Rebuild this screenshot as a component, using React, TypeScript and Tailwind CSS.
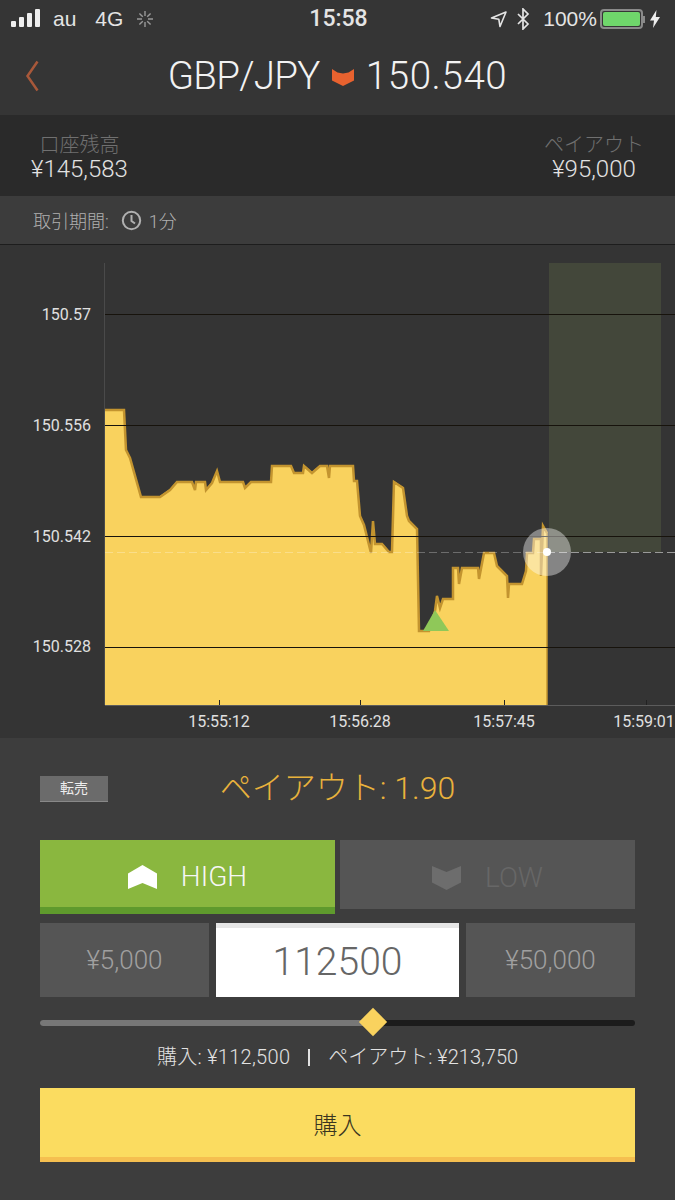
import React from "react";

const latin = "font-['Roboto','Noto_Sans_CJK_JP',sans-serif]";

// price line, in page coordinates (the chart svg uses the same numbers in its viewBox)
const PRICE_LINE =
  "105,409 124,409 126,449 130,457 141,496 160,496 170,489 177,481 192,481 195,489 196,481 205,481 206,489 212,482 217,470 220,481 243,481 245,487 251,481 271,481 272,465 291,465 294,472 303,472 304,465 312,472 320,465 327,465 329,477 330,465 353,465 354,480 357,480 360,515 364,524 371,552 373,520 375,543 382,543 389,551 392,551 394,481 403,487 407,515 409,520 417,528 419,630 429,630 435,610 437,595 440,607 443,598 453,598 453,567 458,567 459,583 462,567 478,567 479,578 484,552 494,552 497,565 507,575 508,597 509,583 522,583 526,570 527,552 533,552 534,538 541,538 541,575 543,525 547,532";

function StatusBar() {
  return (
    <div className="h-[38px] flex items-center justify-between pl-[11px] pr-[15px] text-[#e4e4e4] font-['Liberation_Sans',sans-serif] text-[21px]">
      <div className="flex items-center w-[200px]">
        <svg width="30" height="20" viewBox="0 0 30 20" fill="#eee">
          <rect x="0" y="12" width="5" height="6" rx="1" />
          <rect x="8" y="8" width="5" height="10" rx="1" />
          <rect x="16" y="4" width="5" height="14" rx="1" />
          <rect x="24" y="0" width="5" height="18" rx="1" />
        </svg>
        <span className="ml-[12px]">au</span>
        <span className="ml-[19px]">4G</span>
        <svg className="ml-[12px]" width="20" height="20" viewBox="0 0 20 20" stroke="#999" strokeWidth="1.4">
          <path d="M10 2v5M10 13v5M2 10h5M13 10h5M4.400 4.400l3.400 3.400M12.200 12.200l3.400 3.400M4.400 15.600l3.400-3.400M12.200 7.800l3.400-3.400" />
        </svg>
      </div>
      <span className={`${latin} font-medium text-[23px] ml-[6px]`}>15:58</span>
      <div className="flex items-center justify-end w-[200px]">
        <svg width="18" height="18" viewBox="0 0 18 18" fill="none" stroke="#e4e4e4" strokeWidth="1.6">
          <path d="M1.500 8L16 2l-6 14.500-1.200-7.300z" strokeLinejoin="round" />
        </svg>
        <svg className="ml-[8px]" width="15" height="22" viewBox="0 0 15 22" fill="none" stroke="#e4e4e4" strokeWidth="1.7">
          <path d="M2 6l10 10-5 5V1l5 5L2 16" />
        </svg>
        <span className="ml-[12px]">100%</span>
        <div className="ml-[3px] w-[43px] h-[20px] rounded-[4px] border-2 border-[#8a8a8a] p-[1px]">
          <div className="w-full h-full bg-[#6fd66b] rounded-[2px]" />
        </div>
        <div className="w-[2px] h-[7px] bg-[#8a8a8a] mr-[5px]" />
        <svg width="10" height="18" viewBox="0 0 10 18" fill="#eee">
          <path d="M6.500 0L0 10.500h4L3 18l7-11H5.800z" />
        </svg>
      </div>
    </div>
  );
}

function Header() {
  return (
    <div className="relative h-[77px] flex items-center justify-center pb-[2px]">
      <svg className="absolute left-[25px] top-[22px]" width="15" height="32" viewBox="0 0 15 32" fill="none" stroke="#a8583a" strokeWidth="2.500">
        <path d="M12.500 1.500L2.500 16l10 14.500" />
      </svg>
      <div className={`${latin} font-light text-[38.500px] text-[#f2f2f2] flex items-center`}>
        <span className="tracking-[-0.7px]">GBP/JPY</span>
        <svg className="mx-[12px] mt-[2px]" width="22" height="19" viewBox="0 0 22 19" fill="#e8622f">
          <path d="M0 2l5.500 3.500L11 6.500l5.500-1L22 2v11.500L11 19 0 13.500z" />
        </svg>
        <span className="tracking-[0.6px]">150.540</span>
      </div>
    </div>
  );
}

function BalancePanel() {
  return (
    <div className={`${latin} h-[81px] bg-[#2a2a2a] flex justify-between pl-[31px] pr-[31px] pt-[20px] leading-none`}>
      <div className="flex flex-col items-center">
        <span className="text-[20px] font-light text-[#707070]">口座残高</span>
        <span className="text-[24px] font-light text-[#e2e2e2] mt-[2px]">¥145,583</span>
      </div>
      <div className="flex flex-col items-center">
        <span className="text-[20px] font-light text-[#707070]">ペイアウト</span>
        <span className="text-[24px] font-light text-[#e2e2e2] mt-[2px]">¥95,000</span>
      </div>
    </div>
  );
}

function PeriodRow() {
  return (
    <div className={`${latin} h-[49px] bg-[#3c3c3c] border-b border-[#1d1d1d] flex items-center pl-[33px] pt-[2px] text-[18px] text-[#b0b0b0]`}>
      <span className="font-light">取引期間:</span>
      <svg className="ml-[12px] mb-[2px]" width="21" height="21" viewBox="0 0 21 21" fill="none" stroke="#b0b0b0" strokeWidth="2">
        <circle cx="10.500" cy="10.500" r="8.700" />
        <path d="M10.500 5v6l3.500 2.500" />
      </svg>
      <span className="ml-[7px] font-light">1分</span>
    </div>
  );
}

function Chart() {
  const grid = [314, 425, 536, 647];
  const priceLabels = [
    { y: 314, text: "150.57" },
    { y: 425, text: "150.556" },
    { y: 536, text: "150.542" },
    { y: 646, text: "150.528" },
  ];
  const ticks = [
    { x: 219, labelX: 219, text: "15:55:12" },
    { x: 360, labelX: 360, text: "15:56:28" },
    { x: 504, labelX: 504, text: "15:57:45" },
    { x: 646, labelX: 644, text: "15:59:01" },
  ];

  return (
    <div className="h-[493px] bg-[#343434]">
      <svg className="block w-full h-full" viewBox="0 245 675 493" fontFamily="Roboto, sans-serif">
        <rect x="549" y="263" width="112" height="289" fill="#43473a" />
        <line x1="104.500" y1="263" x2="104.500" y2="705" stroke="#4a4a4a" />
        <line x1="105" y1="705.500" x2="675" y2="705.500" stroke="#5c5c5c" />
        <polygon points={`${PRICE_LINE} 547,705 105,705`} fill="#f9d25e" />
        <polyline points={PRICE_LINE} fill="none" stroke="#c3942f" strokeWidth="2.500" transform="translate(0 1)" />
        <line x1="547" y1="532" x2="547" y2="705" stroke="#c3942f" strokeWidth="1.500" />
        {grid.map((y) => (
          <line key={y} x1="105" y1={y + 0.5} x2="675" y2={y + 0.5} stroke="#17130c" />
        ))}
        <line x1="105" y1="552.500" x2="547" y2="552.500" stroke="#fff" strokeOpacity="0.28" strokeDasharray="8 4" />
        <line x1="547" y1="552.500" x2="675" y2="552.500" stroke="#fff" strokeOpacity="0.5" strokeDasharray="8 4" />
        <polygon points="423,631 435,610 449,631" fill="#8fc859" />
        <circle cx="547" cy="552" r="24" fill="#fff" fillOpacity="0.4" />
        <circle cx="547" cy="552" r="4" fill="#fff" />
        {priceLabels.map((p) => (
          <text key={p.text} x="91" y={p.y + 6} textAnchor="end" fontSize="16" fill="#e0e0e0">
            {p.text}
          </text>
        ))}
        {ticks.map((t) => (
          <g key={t.text}>
            <line x1={t.x + 0.5} y1="700" x2={t.x + 0.5} y2="705" stroke="#222" />
            <text x={t.labelX} y="727" textAnchor="middle" fontSize="16" fill="#e0e0e0">
              {t.text}
            </text>
          </g>
        ))}
      </svg>
    </div>
  );
}

function HighLow() {
  return (
    <div className="flex gap-[5px] mt-[38px] items-start">
      <button className="w-[295px] h-[74px] bg-[#8ab73f] border-b-[7px] border-[#5f9a2d] pt-[7px] flex items-center justify-center text-[#f6f6f6] text-[28px] font-light">
        <svg className="mb-[1px]" width="29" height="24" viewBox="0 0 29 24" fill="#fff">
          <path d="M14.500 0L29 8.500V24l-14.500-6L0 24V8.500z" />
        </svg>
        <span className="ml-[24px]">HIGH</span>
      </button>
      <button className="w-[295px] h-[69px] bg-[#555] pt-[7px] flex items-center justify-center text-[#676767] text-[28px] font-light">
        <svg className="mb-[1px]" width="29" height="24" viewBox="0 0 29 24" fill="#6d6d6d">
          <path d="M0 0l14.500 6L29 0v16.500L14.500 24 0 16.500z" />
        </svg>
        <span className="ml-[24px]">LOW</span>
      </button>
    </div>
  );
}

function AmountRow() {
  return (
    <div className="flex justify-between mt-[9px] h-[74px]">
      <div className="w-[169px] bg-[#555] flex items-center justify-center text-[26px] font-light text-[#a0a0a0]">¥5,000</div>
      <div className="w-[243px] bg-white border-t-[5px] border-[#e6e6e6] flex items-center justify-center text-[39px] font-light text-[#666]">112500</div>
      <div className="w-[169px] bg-[#555] flex items-center justify-center text-[26px] font-light text-[#a0a0a0]">¥50,000</div>
    </div>
  );
}

function AmountSlider() {
  return (
    <div className="relative mt-[23px] h-[6px] rounded-full bg-[#1c1c1c]">
      <div className="h-full w-[332px] rounded-l-full bg-[#777]" />
      <div className="absolute left-[319px] top-[-12px] w-[27px] h-[27px] flex items-center justify-center">
        <div className="w-[20px] h-[20px] rotate-45 bg-[#f9d25e]" />
      </div>
    </div>
  );
}

function OrderPanel() {
  return (
    <div className={`${latin} flex-1 bg-[#3d3d3d] px-[40px] pt-[38px]`}>
      <div className="relative flex justify-center h-[26px] items-center">
        <span className="absolute left-0 top-0 w-[68px] h-[26px] bg-[#6b6b6b] border-b border-[#888] flex items-center justify-center text-[14px] text-[#eee]">
          転売
        </span>
        <span className="text-[32px] font-light text-[#e9b23c] mb-[3px]">ペイアウト: 1.90</span>
      </div>
      <HighLow />
      <AmountRow />
      <AmountSlider />
      <div className="flex justify-center items-center mt-[19px] h-[24px] text-[20px] font-light text-[#e2e2e2]">
        <span className="tracking-[0.3px]">購入: ¥112,500</span>
        <span className="mx-[18px] w-[2px] h-[17px] bg-[#e2e2e2]" />
        <span>ペイアウト: ¥213,750</span>
      </div>
      <button className="w-full h-[74px] mt-[19px] pt-[6px] bg-[#fbdc60] border-b-[5px] border-[#f5bf50] text-[24px] text-[#3a3520] font-light">
        購入
      </button>
    </div>
  );
}

export default function App() {
  return (
    <div className="w-[675px] h-[1200px] flex flex-col overflow-hidden bg-[#353535]">
      <StatusBar />
      <Header />
      <BalancePanel />
      <PeriodRow />
      <Chart />
      <OrderPanel />
    </div>
  );
}
